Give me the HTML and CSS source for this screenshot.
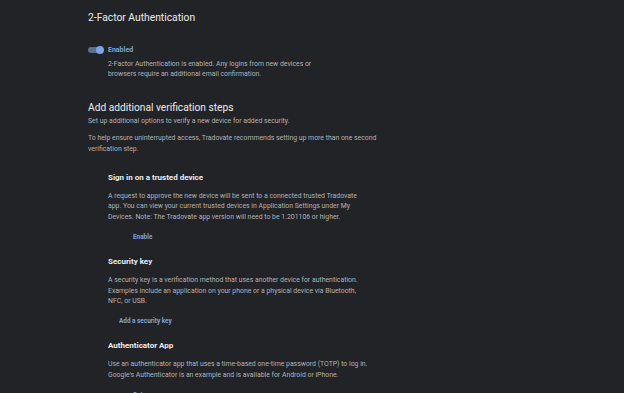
FILE: index.html
```html
<!DOCTYPE html>
<html lang="en">
<head>
    <meta charset="UTF-8">
    <meta name="viewport" content="width=device-width, initial-scale=1.0">
    <title>Security Settings</title>
    <link rel="stylesheet" href="styles.css">
</head>
<body>
    <main class="settings">
        <h1 class="page-title">2-Factor Authentication</h1>

        <div class="twofa">
            <div class="toggle-row">
                <span class="toggle"><span class="knob"></span></span>
                <span class="toggle-label">Enabled</span>
            </div>
            <p class="text">2-Factor Authentication is enabled. Any logins from new devices or<br>browsers require an additional email confirmation.</p>
        </div>

        <h2 class="section-title">Add additional verification steps</h2>
        <p class="text">Set up additional options to verify a new device for added security.</p>
        <p class="text note">To help ensure uninterrupted access, Tradovate recommends setting up more than one second<br>verification step.</p>

        <section class="method">
            <h3 class="method-title">Sign in on a trusted device</h3>
            <p class="text">A request to approve the new device will be sent to a connected trusted Tradovate<br>app. You can view your current trusted devices in Application Settings under My<br>Devices. Note: The Tradovate app version will need to be 1.201106 or higher.</p>
            <a class="link link-wide" href="#">Enable</a>
        </section>

        <section class="method">
            <h3 class="method-title">Security key</h3>
            <p class="text">A security key is a verification method that uses another device for authentication.<br>Examples include an application on your phone or a physical device via Bluetooth,<br>NFC, or USB.</p>
            <a class="link" href="#">Add a security key</a>
        </section>

        <section class="method">
            <h3 class="method-title">Authenticator App</h3>
            <p class="text">Use an authenticator app that uses a time-based one-time password (TOTP) to log in.<br>Google's Authenticator is an example and is available for Android or iPhone.</p>
            <a class="link link-wide" href="#">Set up</a>
        </section>
    </main>
</body>
</html>
```

FILE: styles.css
```css
body {
    font-family: Roboto, "Liberation Sans", sans-serif;
    background-color: #222327;
    color: #b0b2b6;
    margin: 0;
    padding: 0;
}

.settings {
    padding: 11px 0 0 88px;
}

.page-title {
    font-size: 10.3px;
    font-weight: 400;
    color: #ececee;
    margin: 0 0 20px;
    line-height: 14px;
}

.twofa {
    margin-bottom: 21px;
}

.toggle-row {
    display: flex;
    align-items: center;
    gap: 5px;
    height: 10px;
    margin-bottom: 4px;
}

.toggle {
    position: relative;
    display: inline-block;
    width: 15px;
    height: 6px;
    border-radius: 3px;
    background-color: #5b6f8f;
}

.knob {
    position: absolute;
    right: -1px;
    top: -1px;
    width: 8px;
    height: 8px;
    border-radius: 50%;
    background-color: #7aa5e6;
}

.toggle-label {
    font-size: 7px;
    font-weight: 700;
    color: #7ba3dc;
}

.text {
    font-size: 6.88px;
    line-height: 10.4px;
    margin: 0;
}

.twofa .text {
    padding-left: 20px;
}

.section-title {
    font-size: 10.2px;
    font-weight: 400;
    color: #ececee;
    margin: 0 0 2px;
    line-height: 13px;
}

.note {
    margin-top: 7px;
}

.method {
    padding-left: 20px;
    margin-top: 18px;
}

.method + .method {
    margin-top: 13px;
}

.method-title {
    font-size: 8px;
    font-weight: 700;
    color: #ececee;
    margin: 0 0 8px;
    line-height: 11px;
}

.link {
    display: inline-block;
    margin: 11px 0 0 11px;
    font-size: 6.4px;
    font-weight: 700;
    color: #7ba3dc;
    text-decoration: none;
}

.link-wide {
    margin-left: 25px;
}
```
